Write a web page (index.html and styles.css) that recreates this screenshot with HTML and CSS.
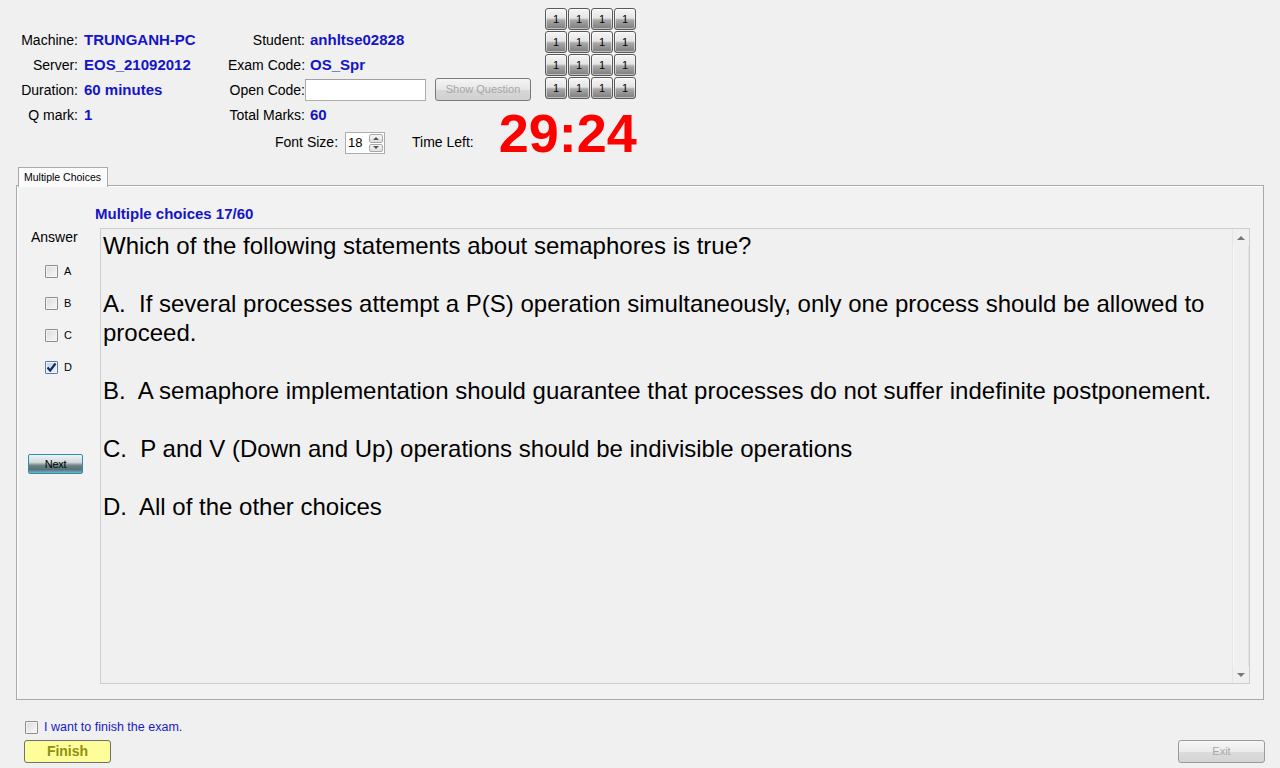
FILE: index.html
```html
<!DOCTYPE html>
<html>
<head>
<meta charset="utf-8">
<link rel="stylesheet" href="styles.css">
</head>
<body>
<div class="header">
  <div class="top">
    <div class="info info1">
      <span class="lbl">Machine:</span><span class="val">TRUNGANH-PC</span>
      <span class="lbl">Server:</span><span class="val">EOS_21092012</span>
      <span class="lbl">Duration:</span><span class="val">60 minutes</span>
      <span class="lbl">Q mark:</span><span class="val">1</span>
    </div>
    <div class="info info2">
      <span class="lbl">Student:</span><span class="val">anhltse02828</span>
      <span class="lbl">Exam Code:</span><span class="val">OS_Spr</span>
      <span class="lbl">Open Code:</span>
      <div class="codebox"><div class="input"></div><div class="btn-show">Show Question</div></div>
      <span class="lbl">Total Marks:</span><span class="val">60</span>
    </div>
    <div class="bgrid">
      <div class="cell">1</div><div class="cell">1</div><div class="cell">1</div><div class="cell">1</div>
      <div class="cell">1</div><div class="cell">1</div><div class="cell">1</div><div class="cell">1</div>
      <div class="cell">1</div><div class="cell">1</div><div class="cell">1</div><div class="cell">1</div>
      <div class="cell">1</div><div class="cell">1</div><div class="cell">1</div><div class="cell">1</div>
    </div>
  </div>
  <div class="fontrow">
    <span class="fs-label">Font Size:</span>
    <div class="spinner"><span class="spin-val">18</span><div class="spin-btns"><div class="spin-b"><span class="tri-up"></span></div><div class="spin-b"><span class="tri-down"></span></div></div></div>
    <span class="tl-label">Time Left:</span>
    <span class="timer">29:24</span>
  </div>
</div>

<div class="tabs"><div class="tab">Multiple Choices</div></div>
<div class="panel">
  <div class="title">Multiple choices 17/60</div>
  <div class="pbody">
    <div class="leftcol">
      <div class="answer">Answer</div>
      <div class="opt"><span class="cb"></span><span class="opt-l">A</span></div>
      <div class="opt"><span class="cb"></span><span class="opt-l">B</span></div>
      <div class="opt"><span class="cb"></span><span class="opt-l">C</span></div>
      <div class="opt"><span class="cb checked"><svg width="11" height="11" viewBox="0 0 11 11"><path d="M1.5 5.5 L4.2 8.5 L9.5 1.5" fill="none" stroke="#1a2a5a" stroke-width="2.2"/></svg></span><span class="opt-l">D</span></div>
      <div class="btn-next">Next</div>
    </div>
    <div class="qbox">
      <div class="qtext">
        <p>Which of the following statements about semaphores is true?</p>
        <p>A.&nbsp; If several processes attempt a P(S) operation simultaneously, only one process should be allowed to proceed.</p>
        <p>B.&nbsp; A semaphore implementation should guarantee that processes do not suffer indefinite postponement.</p>
        <p>C.&nbsp; P and V (Down and Up) operations should be indivisible operations</p>
        <p>D.&nbsp; All of the other choices</p>
      </div>
      <div class="sbar">
        <div class="sarrow"><span class="tri-up"></span></div>
        <div class="strack"></div>
        <div class="sarrow"><span class="tri-down"></span></div>
      </div>
    </div>
  </div>
</div>

<div class="foot">
  <div class="finish-row"><span class="cb"></span><span class="finish-l">I want to finish the exam.</span></div>
  <div class="btn-row">
    <div class="btn-finish">Finish</div>
    <div class="btn-exit">Exit</div>
  </div>
</div>
</body>
</html>
```

FILE: styles.css
```css
* { box-sizing: border-box; }
html, body { margin: 0; padding: 0; }
body {
  width: 1280px;
  height: 768px;
  overflow: hidden;
  background: #f0f0f0;
  font-family: "Liberation Sans", Arial, sans-serif;
  color: #000;
}

.header { height: 167px; display: flex; flex-direction: column; }
.top { display: flex; align-items: flex-start; height: 128px; }

.info {
  display: grid;
  grid-auto-rows: 25px;
  align-items: center;
  margin-top: 27px;
  font-size: 14px;
  line-height: 16px;
}
.info1 { margin-left: 20px; grid-template-columns: 58px 150px; }
.info2 { grid-template-columns: 77px auto; }
.lbl { text-align: right; white-space: nowrap; }
.val { color: #1414c8; font-weight: bold; font-size: 15px; padding-left: 6px; white-space: nowrap; }
.info2 .val { padding-left: 5px; }

.codebox { display: flex; align-items: center; gap: 9px; }
.input {
  width: 121px; height: 22px;
  background: #fff;
  border: 1px solid #abadb3;
  border-top-color: #a0a0a0;
}
.btn-show {
  width: 96px; height: 23px;
  border: 1px solid #7a7a7a;
  border-radius: 3px;
  background: linear-gradient(#f4f4f4, #e6e6e6 50%, #d8d8d8 52%, #d0d0d0);
  color: #a6a6a6;
  font-size: 11px;
  line-height: 21px;
  text-align: center;
}

.bgrid {
  margin-left: 14px;
  margin-top: 8px;
  display: grid;
  grid-template-columns: repeat(4, 22px);
  grid-auto-rows: 22px;
  gap: 1px;
}
.cell {
  border: 1px solid #5a5a5a;
  border-radius: 3px;
  background: linear-gradient(#f6f6f6, #e4e4e4 45%, #a9a9a9 55%, #7c7c7c);
  font-size: 11px;
  line-height: 20px;
  text-align: center;
  color: #000;
  box-shadow: inset 0 0 0 1px rgba(255,255,255,0.5);
}

.fontrow {
  display: flex;
  align-items: flex-start;
  height: 39px;
  padding-left: 275px;
  font-size: 14px;
  line-height: 16px;
}
.fs-label { margin-top: 6px; }
.spinner {
  margin-left: 7px;
  margin-top: 4px;
  width: 40px; height: 22px;
  background: #fff;
  border: 1px solid #abadb3;
  display: flex;
  align-items: center;
  justify-content: space-between;
}
.spin-val { font-size: 13px; padding-left: 2px; }
.spin-btns { width: 15px; height: 20px; display: flex; flex-direction: column; gap: 1px; padding: 1px 1px 1px 0; }
.spin-b {
  flex: 1;
  border: 1px solid #a8a8a8;
  border-radius: 2px;
  background: linear-gradient(#f6f6f6, #dedede);
  display: flex; align-items: center; justify-content: center;
}
.tri-up, .tri-down { width: 0; height: 0; border-left: 3px solid transparent; border-right: 3px solid transparent; }
.tri-up { border-bottom: 3px solid #555; }
.tri-down { border-top: 3px solid #555; }
.tl-label { margin-left: 27px; margin-top: 6px; }
.timer {
  margin-left: 25px;
  margin-top: -22px;
  font-size: 54px;
  line-height: 54px;
  font-weight: bold;
  color: #ff0000;
}

.tabs { height: 19px; padding-left: 18px; position: relative; z-index: 1; margin-bottom: -1px; }
.tab {
  width: 90px; height: 20px;
  border: 1px solid #a9a9a9;
  border-bottom: none;
  background: #fbfbfb;
  font-size: 10.5px;
  line-height: 18px;
  padding-left: 5px;
}

.panel {
  margin: 0 16px;
  height: 515px;
  border: 1px solid #a9a9a9;
  background: #f2f2f2;
  box-shadow: inset 1px 1px 0 #fff;
}
.title {
  margin-top: 19px;
  padding-left: 78px;
  color: #1414c8;
  font-weight: bold;
  font-size: 15px;
  line-height: 18px;
}
.pbody { display: flex; margin-top: 5px; }
.leftcol { width: 83px; padding-top: 1px; }
.answer { padding-left: 14px; font-size: 14px; line-height: 16px; }
.opt {
  height: 32px;
  display: flex;
  align-items: center;
  padding-left: 28px;
}
.answer + .opt { margin-top: 10px; }
.cb {
  width: 13px; height: 13px;
  border: 1px solid #8e8f8f;
  border-radius: 1px;
  background: linear-gradient(135deg, #dcdcdc, #f8f8f8);
  box-shadow: inset 0 0 0 1px #f4f4f4;
  display: inline-flex; align-items: center; justify-content: center;
  flex: none;
}
.cb.checked { background: linear-gradient(135deg, #b9d3ec, #eef5fc); border-color: #5a7ca8; }
.opt-l { margin-left: 6px; font-size: 11px; }
.btn-next {
  margin-top: 71px;
  margin-left: 11px;
  width: 55px; height: 20px;
  border: 1px solid #2f8ea8;
  border-radius: 2px;
  background: linear-gradient(#eef2f3, #d2dadc 40%, #6e8288 58%, #587078 80%, #70b8c8);
  font-size: 11px;
  line-height: 18px;
  text-align: center;
  letter-spacing: -0.3px;
}

.qbox {
  width: 1150px; height: 456px;
  border: 1px solid #cdcdcd;
  background: #f0f0f0;
  display: flex;
}
.qtext { flex: 1; padding: 2px 0 0 2px; font-size: 24px; line-height: 29px; }
.qtext p { margin: 0 0 29px 0; }
.sbar {
  width: 17px;
  display: flex; flex-direction: column;
  border-left: 1px solid #e6e6e6;
  background: #f0f0f0;
}
.sarrow { height: 17px; display: flex; align-items: center; justify-content: center; }
.sarrow .tri-up { border-bottom-color: #777; border-left-width: 4px; border-right-width: 4px; border-bottom-width: 4px; }
.sarrow .tri-down { border-top-color: #777; border-left-width: 4px; border-right-width: 4px; border-top-width: 4px; }
.strack { flex: 1; border-left: 1px solid #fafafa; border-right: 1px solid #e2e2e2; }

.foot { padding-top: 19px; }
.finish-row { display: flex; align-items: center; height: 16px; padding-left: 25px; }
.finish-l { margin-left: 6px; color: #1a1ac8; font-size: 12.5px; }
.btn-row { display: flex; justify-content: space-between; padding: 0 15px 0 24px; margin-top: 5px; }
.btn-finish {
  width: 87px; height: 23px;
  border: 1px solid #6f6f6f;
  border-radius: 3px;
  background: #fdfd9a;
  color: #8f8f10;
  font-weight: bold;
  font-size: 14px;
  line-height: 21px;
  text-align: center;
}
.btn-exit {
  width: 87px; height: 23px;
  border: 1px solid #9a9a9a;
  border-radius: 3px;
  background: linear-gradient(#f6f6f6, #ececec 50%, #dcdcdc 52%, #d4d4d4);
  color: #a8a8a8;
  font-size: 11px;
  line-height: 21px;
  text-align: center;
}
```
